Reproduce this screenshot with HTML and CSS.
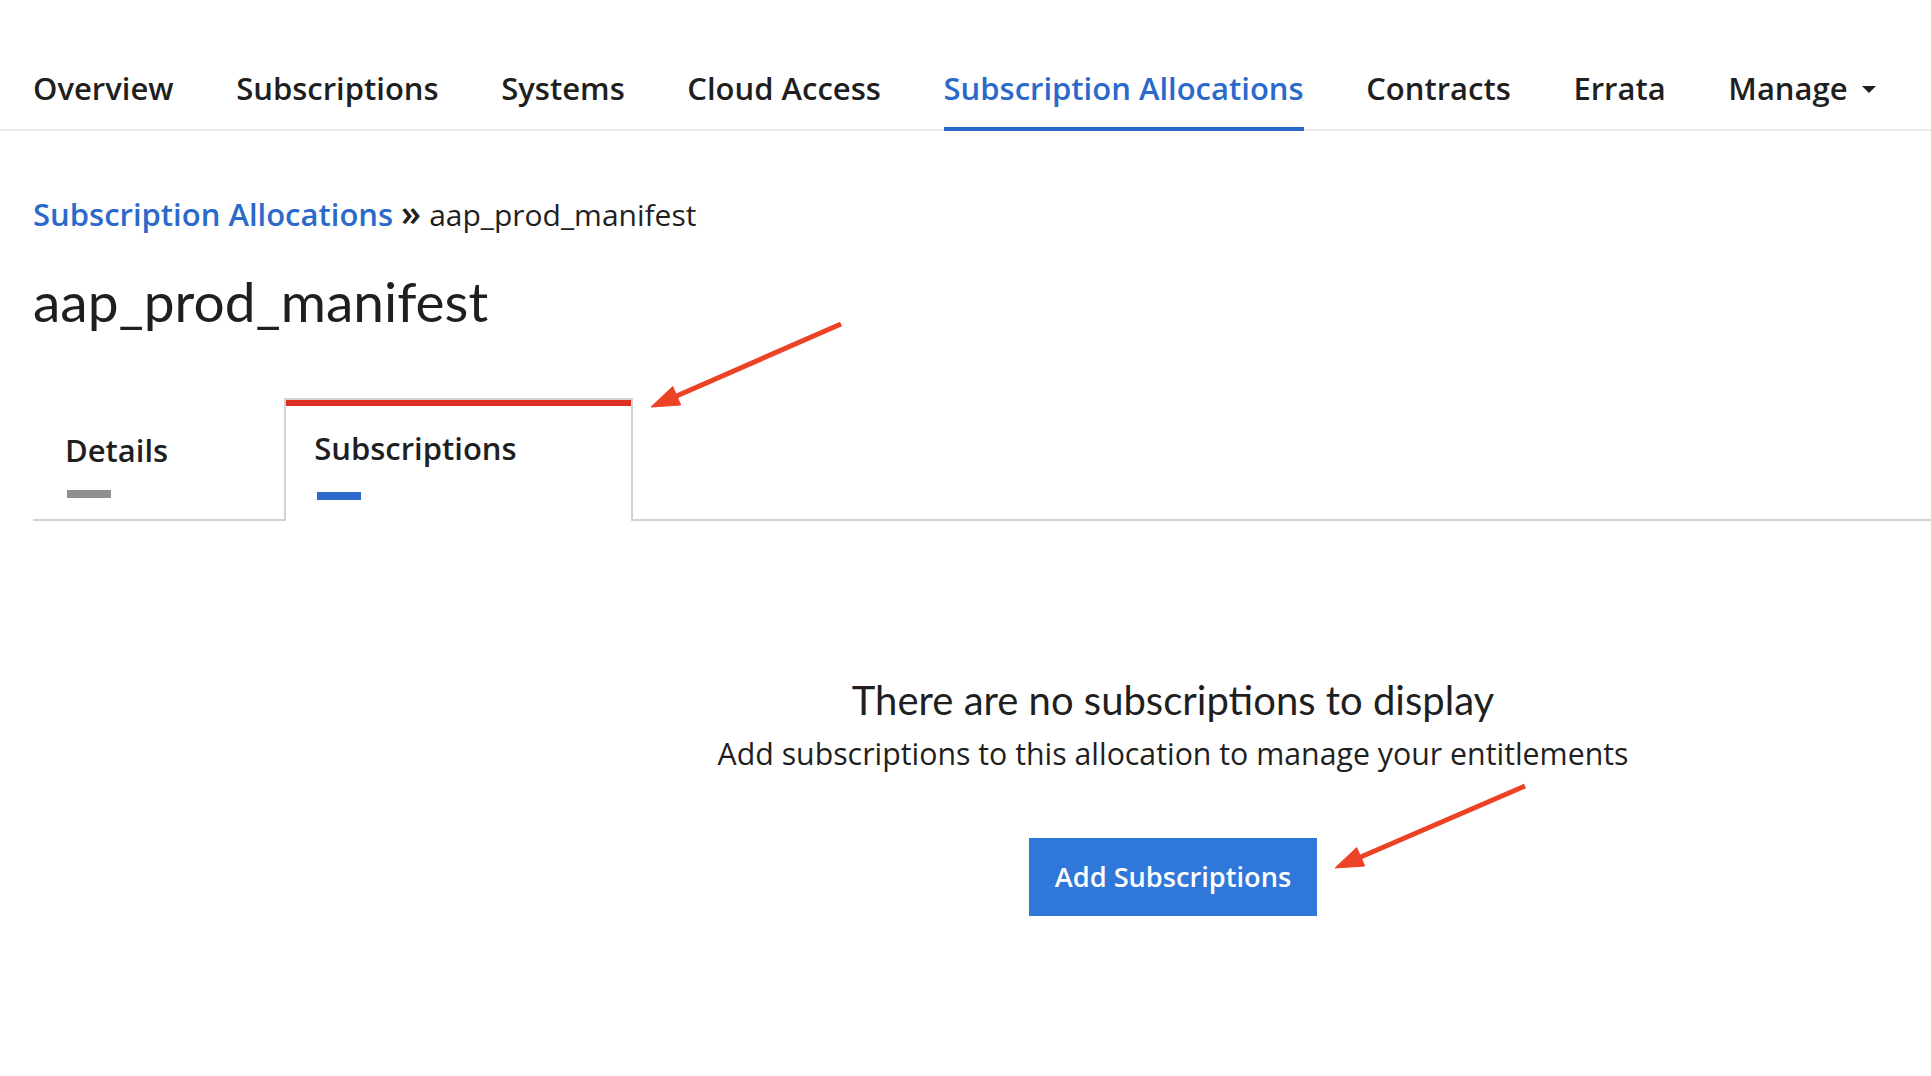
FILE: index.html
```html
<!DOCTYPE html>
<html lang="en">
<head>
<meta charset="utf-8">
<title>aap_prod_manifest</title>
<link rel="stylesheet" href="styles.css">
</head>
<body>
<div class="page">
  <nav class="topnav">
    <a class="nav-item">Overview</a>
    <a class="nav-item">Subscriptions</a>
    <a class="nav-item">Systems</a>
    <a class="nav-item">Cloud Access</a>
    <a class="nav-item active">Subscription Allocations</a>
    <a class="nav-item">Contracts</a>
    <a class="nav-item">Errata</a>
    <a class="nav-item">Manage<svg class="caret" width="14" height="7" viewBox="0 0 14 7"><path d="M0 0 L14 0 L7 7 Z" fill="#1f1f1f"/></svg></a>
  </nav>

  <div class="content">
    <div class="breadcrumb"><a class="crumb-link">Subscription Allocations</a><span class="crumb-sep">»</span><span class="crumb-current">aap_prod_manifest</span></div>
    <h1 class="title">aap_prod_manifest</h1>

    <div class="tabs">
      <div class="tab">
        <span class="tab-label">Details</span>
        <span class="tab-bar"></span>
      </div>
      <div class="tab selected">
        <span class="tab-label">Subscriptions</span>
        <span class="tab-bar"></span>
      </div>
    </div>
  </div>

  <div class="empty">
    <div class="empty-title">There are no subscriptions to display</div>
    <div class="empty-body">Add subscriptions to this allocation to manage your entitlements</div>
    <button class="btn-primary">Add Subscriptions</button>
  </div>

  <svg class="annotations" width="1931" height="1076" viewBox="0 0 1931 1076">
    <g fill="#ec4326" stroke="#ec4326">
      <line x1="841" y1="324" x2="672" y2="398" stroke-width="5"/>
      <polygon points="651,407 672.7,386.6 680.7,405" stroke-width="1" stroke-linejoin="round"/>
      <line x1="1525" y1="786" x2="1356" y2="859" stroke-width="5"/>
      <polygon points="1335,868 1356.7,847.6 1364.7,866" stroke-width="1" stroke-linejoin="round"/>
    </g>
  </svg>
</div>
</body>
</html>
```

FILE: styles.css
```css
* {
  box-sizing: border-box;
}

html, body {
  margin: 0;
  padding: 0;
  background: #ffffff;
}

body {
  font-family: "Open Sans", "Noto Sans", sans-serif;
  color: #151515;
  width: 1931px;
  height: 1076px;
  overflow: hidden;
}

.page {
  position: relative;
  width: 1931px;
  height: 1076px;
}

/* top navigation */
.topnav {
  display: flex;
  gap: 62.6px;
  padding-left: 33px;
  border-bottom: 2px solid #ececec;
}

.nav-item {
  position: relative;
  display: flex;
  align-items: center;
  font-size: 31px;
  font-weight: 600;
  line-height: 40px;
  padding: 68px 0 21px;
  color: #1f1f1f;
}

.nav-item.active {
  color: #2b69cb;
}

.nav-item.active::after {
  content: "";
  position: absolute;
  left: 0;
  right: 0;
  bottom: -2px;
  height: 4px;
  background: #2b69cb;
}

.caret {
  margin-left: 14px;
  margin-top: 3px;
}

/* content */
.content {
  padding-left: 33px;
}

.breadcrumb {
  margin-top: 62px;
  font-size: 30px;
  line-height: 40px;
  display: flex;
  align-items: baseline;
}

.crumb-link {
  color: #2b69cb;
  font-weight: 600;
  font-size: 31px;
}

.crumb-sep {
  margin: 0 8px 0 8px;
  font-size: 36px;
  font-weight: 600;
  line-height: 40px;
  color: #1f1f1f;
}

.crumb-current {
  color: #1f1f1f;
}

.title {
  margin: 34px 0 0;
  font-family: "Lato", "Open Sans", sans-serif;
  font-weight: 400;
  font-size: 55px;
  line-height: 64px;
  color: #1f1f1f;
}

/* tabs */
.tabs {
  margin-top: 65px;
  display: flex;
  align-items: flex-end;
  border-bottom: 2px solid #d2d2d2;
}

.tab {
  display: flex;
  flex-direction: column;
  align-items: flex-start;
  padding: 0 116px 21px 32px;
}

.tab-label {
  font-size: 31px;
  font-weight: 600;
  line-height: 40px;
  color: #1f1f1f;
}

.tab-bar {
  display: block;
  width: 44px;
  height: 8px;
  margin-top: 20px;
  margin-left: 2px;
  background: #8f8f8f;
}

.tab.selected {
  position: relative;
  border: 2px solid #d2d2d2;
  border-bottom: none;
  margin-bottom: -2px;
  background: #ffffff;
  padding: 28px 114px 21px 28px;
}

.tab.selected::before {
  content: "";
  position: absolute;
  top: 0;
  left: 0;
  right: 0;
  height: 6px;
  background: #dc2f22;
}

.tab.selected .tab-bar {
  background: #2b69cb;
  margin-top: 24px;
  margin-left: 3px;
}

/* empty state */
.empty {
  display: flex;
  flex-direction: column;
  align-items: center;
  padding-left: 415px;
  margin-top: 154px;
}

.empty-title {
  font-family: "Lato", "Open Sans", sans-serif;
  font-size: 40px;
  line-height: 50px;
  font-weight: 400;
  color: #1f1f1f;
}

.empty-body {
  margin-top: 9px;
  font-size: 30.3px;
  line-height: 40px;
  color: #1f1f1f;
}

.btn-primary {
  margin-top: 64px;
  font-family: "Open Sans", "Noto Sans", sans-serif;
  font-size: 27.2px;
  font-weight: 600;
  line-height: 40px;
  color: #ffffff;
  background: #2f77d8;
  border: none;
  border-radius: 0;
  padding: 19px 26px 19px;
}

/* annotation overlay */
.annotations {
  position: absolute;
  left: 0;
  top: 0;
  pointer-events: none;
}
```
